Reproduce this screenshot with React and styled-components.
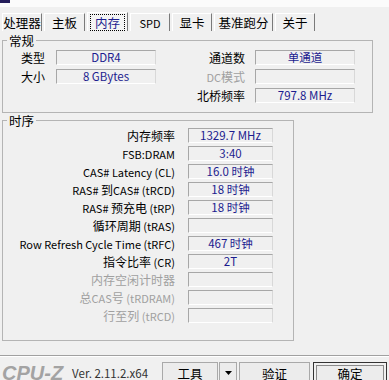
import React from "react";
import styled, { createGlobalStyle } from "styled-components";

const GlobalStyle = createGlobalStyle`
  body {
    margin: 0;
    background: #f0f0f0;
    font-family: "Noto Sans CJK SC", "Liberation Sans", sans-serif;
    font-size: 12px;
    color: #000;
  }
`;

const tabs = [
  { name: "处理器", width: 40 },
  { name: "主板", width: 41 },
  { name: "内存", width: 41 },
  { name: "SPD", width: 40 },
  { name: "显卡", width: 40 },
  { name: "基准跑分", width: 59 },
  { name: "关于", width: 40 },
];

const timings = [
  { label: "内存频率", value: "1329.7 MHz" },
  { label: "FSB:DRAM", value: "3:40" },
  { label: "CAS# Latency (CL)", value: "16.0 时钟" },
  { label: "RAS# 到CAS# (tRCD)", value: "18 时钟" },
  { label: "RAS# 预充电 (tRP)", value: "18 时钟" },
  { label: "循环周期 (tRAS)", value: "" },
  { label: "Row Refresh Cycle Time (tRFC)", value: "467 时钟" },
  { label: "指令比率 (CR)", value: "2T" },
  { label: "内存空闲计时器", value: "", disabled: true },
  { label: "总CAS号 (tRDRAM)", value: "", disabled: true },
  { label: "行至列 (tRCD)", value: "", disabled: true },
];

// latin runs get a smaller size so they match the narrow windows font
const Mixed = ({ text }) =>
  text
    .split(/([\u4e00-\u9fff]+)/)
    .filter((part) => part !== "")
    .map((part, i) =>
      /[\u4e00-\u9fff]/.test(part) ? (
        <span key={i}>{part}</span>
      ) : (
        <Latin key={i}>{part}</Latin>
      )
    );

const App = () => {
  return (
    <Window>
      <GlobalStyle />
      <TitleStrip>
        <TitleIcon />
      </TitleStrip>
      <TabBar>
        {tabs.map((t) => (
          <Tab key={t.name} $active={t.name === "内存"} $width={t.width}>
            <TabText $active={t.name === "内存"}>
              <Mixed text={t.name} />
            </TabText>
          </Tab>
        ))}
      </TabBar>
      <Panel>
        <Group $width="371px" $gap="0px">
          <Legend>常规</Legend>
          <GeneralGrid>
            <Label $pad="11px">类型</Label>
            <Field>DDR4</Field>
            <Label $pad="10px">通道数</Label>
            <Field>单通道</Field>
            <Label $pad="11px">大小</Label>
            <Field>8 GBytes</Field>
            <Label $pad="10px" $disabled>
              <Mixed text="DC模式" />
            </Label>
            <Field />
            <span />
            <span />
            <Label $pad="10px">北桥频率</Label>
            <Field>797.8 MHz</Field>
          </GeneralGrid>
        </Group>
        <Group $width="292px" $gap="1px">
          <Legend>时序</Legend>
          <TimingGrid>
            {timings.map((r) => (
              <React.Fragment key={r.label}>
                <Label $pad="0px" $disabled={r.disabled}>
                  <Mixed text={r.label} />
                </Label>
                <Field>{r.value}</Field>
              </React.Fragment>
            ))}
          </TimingGrid>
        </Group>
      </Panel>
      <Footer>
        <Logo>CPU-Z</Logo>
        <Version>Ver. 2.11.2.x64</Version>
        <ButtonGroup>
          <Button $width="56px">工具</Button>
          <Button $width="18px">
            <svg width="7" height="4" viewBox="0 0 7 4">
              <polygon points="0,0 7,0 3.5,4" fill="#000" />
            </svg>
          </Button>
        </ButtonGroup>
        <Button $width="71px" $ml="2px">
          验证
        </Button>
        <Button $width="74px" $ml="3px" $default>
          确定
        </Button>
      </Footer>
    </Window>
  );
};

const Window = styled.div`
  width: 389px;
  height: 380px;
  overflow: hidden;
  background: #f0f0f0;
`;

const TitleStrip = styled.div`
  height: 7px;
  background: #fbfbfb;
`;

const TitleIcon = styled.div`
  width: 10px;
  height: 3px;
  background: #241d5a;
`;

const Latin = styled.span`
  font-size: 11px;
`;

const TabBar = styled.div`
  display: flex;
  align-items: flex-end;
  height: 24px;
  padding-left: 2px;
  gap: 2px;
`;

const Tab = styled.div`
  width: ${(p) => p.$width}px;
  height: ${(p) => (p.$active ? "19px" : "18px")};
  box-sizing: border-box;
  display: flex;
  align-items: center;
  justify-content: center;
  border-top: 1px solid #ffffff;
  border-left: 1px solid #ffffff;
  border-right: 1px solid #7a7a7a;
  background: ${(p) => (p.$active ? "#f4f4f4" : "#f0f0f0")};
  font-size: 12.5px;
  line-height: 15px;
  white-space: nowrap;
`;

const TabText = styled.span`
  color: ${(p) => (p.$active ? "#1c1c8f" : "#000")};
  outline: ${(p) => (p.$active ? "1px dotted #000" : "none")};
  padding: 0 ${(p) => (p.$active ? "4px" : "0")};
`;

const Panel = styled.div`
  padding: 3px 2px 0;
`;

const Group = styled.fieldset`
  width: ${(p) => p.$width};
  box-sizing: border-box;
  margin: ${(p) => p.$gap} 0 0;
  padding: 0;
  border: 1px solid #b4b4b4;
`;

const Legend = styled.legend`
  margin-left: 4px;
  padding: 0 2px;
  font-size: 12.5px;
  line-height: 13px;
`;

const GeneralGrid = styled.div`
  display: grid;
  grid-template-columns: 53px 100px 99px 100px;
  grid-auto-rows: 15px;
  row-gap: 4px;
  padding: 3px 0 9px;
`;

const TimingGrid = styled.div`
  display: grid;
  grid-template-columns: 172px 85px;
  column-gap: 13px;
  grid-auto-rows: 15px;
  row-gap: 3px;
  padding: 1px 0 17px;
`;

const Label = styled.span`
  text-align: right;
  padding-right: ${(p) => p.$pad};
  color: ${(p) => (p.$disabled ? "#a0a0a0" : "#000")};
  line-height: 15px;
  white-space: nowrap;
`;

const Field = styled.div`
  box-sizing: border-box;
  height: 15px;
  border: 1px solid #a7a7a7;
  border-bottom-color: #ffffff;
  border-right-color: #d8d8d8;
  background: #f0f0f0;
  color: #1c1c8f;
  text-align: center;
  font-size: 11.5px;
  line-height: 13px;
  white-space: nowrap;
`;

const Footer = styled.div`
  margin-top: 14px;
  border-top: 1px solid #a0a0a0;
  box-shadow: inset 0 1px 0 #ffffff;
  display: flex;
  align-items: center;
  padding: 6px 0 0 2px;
`;

const Logo = styled.span`
  flex-shrink: 0;
  font-family: "Liberation Sans", Arial, sans-serif;
  font-weight: bold;
  font-style: italic;
  font-size: 20px;
  color: #a3a3a3;
  line-height: 22px;
  margin-right: 9px;
  white-space: nowrap;
`;

const Version = styled.span`
  flex-shrink: 0;
  width: 90px;
  color: #333;
  font-size: 11.5px;
  white-space: nowrap;
`;

const ButtonGroup = styled.div`
  display: flex;
  flex-shrink: 0;
  gap: 1px;
`;

const Button = styled.div`
  flex-shrink: 0;
  width: ${(p) => p.$width};
  height: 22px;
  margin-left: ${(p) => p.$ml || "0"};
  box-sizing: border-box;
  display: flex;
  align-items: center;
  justify-content: center;
  background: #ececec;
  border: 1px solid ${(p) => (p.$default ? "#333" : "#a9a9a9")};
  box-shadow: ${(p) =>
    p.$default ? "inset 0 0 0 2px #f0f0f0, inset 0 0 0 3px #8a8a8a" : "none"};
  font-size: 12.5px;
  white-space: nowrap;
`;

export default App;
